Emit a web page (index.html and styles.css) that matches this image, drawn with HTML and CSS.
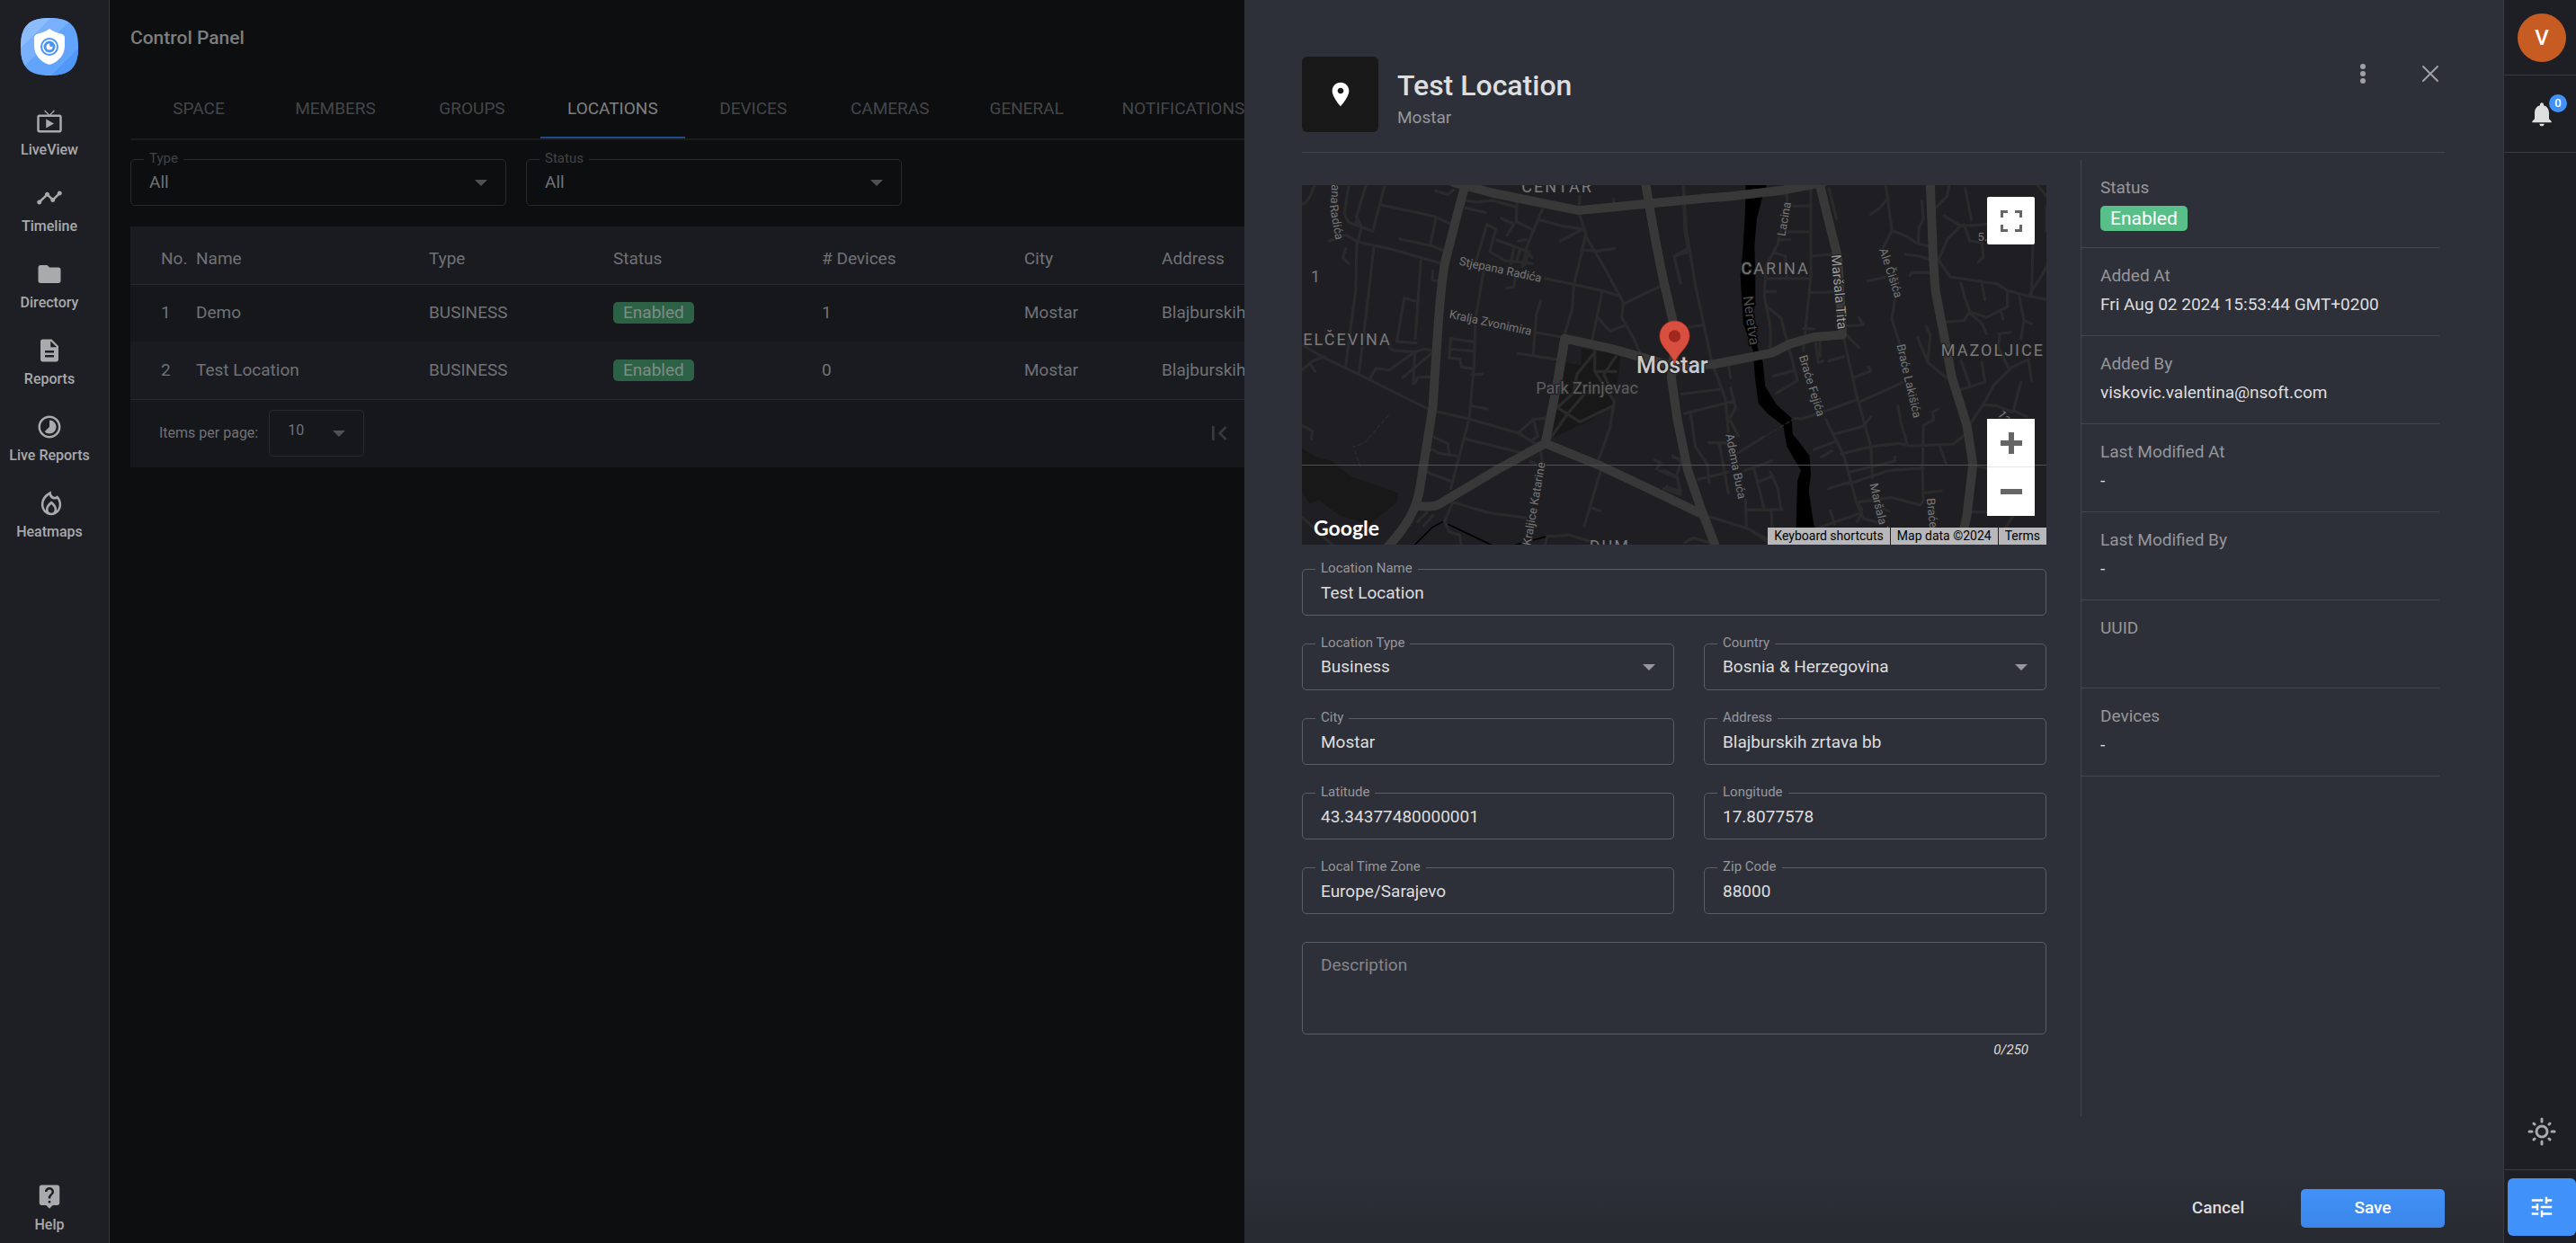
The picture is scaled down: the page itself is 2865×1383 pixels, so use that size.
FILE: index.html
```html
<!DOCTYPE html>
<html lang="en">

<head>
    <meta charset="UTF-8">
    <meta name="viewport" content="width=device-width, initial-scale=1.0">
    <title>Control Panel</title>
    <link rel="stylesheet" href="styles.css">
</head>

<body>
    <div class="app">
        <nav class="sidebar">
            <a href="#" class="logo" aria-label="Home">
                <svg viewBox="0 0 64 64">
                    <defs>
                        <clipPath id="logoShape">
                            <path d="M32 0C55 0 64 9 64 32S55 64 32 64 0 55 0 32 9 0 32 0z" />
                        </clipPath>
                    </defs>
                    <g clip-path="url(#logoShape)">
                        <path fill="#62a3fb" d="M0 0h64v64H0z" />
                        <path fill="#8dbcfb" d="M0 0h34L0 34z" />
                        <path fill="#79b0fb" d="M34 0h24L0 58V34z" />
                        <path fill="#4f97f9" d="M64 34v30H34z" />
                    </g>
                    <path fill="#fff" d="M32 12c4 3 8 4 14 6 2 1 3 2 3 4v9c0 10-7 17-14 20-2 1-4 1-6 0-7-3-14-10-14-20v-9c0-2 1-3 3-4 6-2 10-3 14-6z" />
                    <g fill="none" stroke="#4a93f8">
                        <circle cx="32" cy="32" r="9" stroke-width="2" />
                        <circle cx="32" cy="32" r="5" stroke-width="3" />
                    </g>
                    <circle cx="34" cy="30" r="2" fill="#4a93f8" />
                </svg>
            </a>
            <a href="#" class="nav-item">
                <svg class="icon" viewBox="0 0 24 24"><path d="M21 6h-7.59l3.29-3.29L16 2l-4 4-4-4-.71.71L10.59 6H3c-1.1 0-2 .89-2 2v12c0 1.1.9 2 2 2h18c1.1 0 2-.9 2-2V8c0-1.11-.9-2-2-2zm0 14H3V8h18v12zM9 10v8l7-4z" /></svg>
                <span>LiveView</span>
            </a>
            <a href="#" class="nav-item">
                <svg class="icon" viewBox="0 0 24 24"><path d="M23 8c0 1.1-.9 2-2 2-.18 0-.35-.02-.51-.07l-3.56 3.55c.05.16.07.34.07.52 0 1.1-.9 2-2 2s-2-.9-2-2c0-.18.02-.36.07-.52l-2.55-2.55c-.16.05-.34.07-.52.07s-.36-.02-.52-.07l-4.55 4.56c.05.16.07.33.07.51 0 1.1-.9 2-2 2s-2-.9-2-2 .9-2 2-2c.18 0 .35.02.51.07l4.56-4.55C8.02 9.36 8 9.18 8 9c0-1.1.9-2 2-2s2 .9 2 2c0 .18-.02.36-.07.52l2.55 2.55c.16-.05.34-.07.52-.07s.36.02.52.07l3.55-3.56C19.02 8.35 19 8.18 19 8c0-1.1.9-2 2-2s2 .9 2 2z" /></svg>
                <span>Timeline</span>
            </a>
            <a href="#" class="nav-item">
                <svg class="icon" viewBox="0 0 24 24"><path d="M10 4H4c-1.1 0-1.99.9-1.99 2L2 18c0 1.1.9 2 2 2h16c1.1 0 2-.9 2-2V8c0-1.1-.9-2-2-2h-8l-2-2z" /></svg>
                <span>Directory</span>
            </a>
            <a href="#" class="nav-item">
                <svg class="icon" viewBox="0 0 24 24"><path d="M14 2H6c-1.1 0-1.99.9-1.99 2L4 20c0 1.1.89 2 1.99 2H18c1.1 0 2-.9 2-2V8l-6-6zm2 16H8v-2h8v2zm0-4H8v-2h8v2zm-3-5V3.5L18.5 9H13z" /></svg>
                <span>Reports</span>
            </a>
            <a href="#" class="nav-item">
                <svg class="icon" viewBox="0 0 24 24"><path d="M16.24 7.76C15.07 6.59 13.54 6 12 6v6l-4.24 4.24c2.34 2.34 6.14 2.34 8.49 0 2.34-2.34 2.34-6.14-.01-8.48zM12 2C6.48 2 2 6.48 2 12s4.48 10 10 10 10-4.48 10-10S17.52 2 12 2zm0 18c-4.42 0-8-3.58-8-8s3.58-8 8-8 8 3.58 8 8-3.58 8-8 8z" /></svg>
                <span>Live Reports</span>
            </a>
            <a href="#" class="nav-item">
                <svg class="icon" viewBox="-2 0 24 24"><path fill-rule="evenodd" d="M11.5 1.2c-.3 2.6.9 4.3 2.3 4.8 1.5.5 2.6-.2 3-1.1 2.5 2 3.7 4.9 3.7 8.1 0 5.2-3.7 9.5-8.9 9.5S2.700 18.200 2.700 13c0-5 3.300-9.500 8.800-11.800zM9.800 4.500C6.500 6.700 4.700 9.700 4.700 13c0 2.200.8 4.100 2.100 5.400-.3-3.700 2.100-6.300 4.900-8.400 2.700 2.100 5.100 4.700 4.800 8.400 1.300-1.300 2-3.200 2-5.400 0-2-.5-3.700-1.600-5.100-3 1.300-6.600-.2-7.100-3.400zM11.700 12.800c-1.600 1.500-2.900 2.900-2.900 4.700 0 1.700 1.200 3 2.800 3s2.900-1.300 2.900-3c0-1.800-1.200-3.200-2.800-4.700z" /></svg>
                <span>Heatmaps</span>
            </a>
            <a href="#" class="nav-item help">
                <svg class="icon" viewBox="0 0 24 24"><path d="M19 2H5c-1.11 0-2 .9-2 2v14c0 1.1.89 2 2 2h4l3 3 3-3h4c1.1 0 2-.9 2-2V4c0-1.1-.9-2-2-2zm-6 16h-2v-2h2v2zm2.070-7.750l-.9.920C13.450 11.900 13 12.500 13 14h-2v-.5c0-1.100.450-2.100 1.170-2.830l1.240-1.260c.370-.360.590-.860.590-1.410 0-1.100-.9-2-2-2s-2 .9-2 2H8c0-2.210 1.790-4 4-4s4 1.790 4 4c0 .880-.360 1.680-.930 2.250z" /></svg>
                <span>Help</span>
            </a>
        </nav>

        <main class="main">
            <h1>Control Panel</h1>
            <div class="tabs" role="tablist">
                <button role="tab">SPACE</button>
                <button role="tab">MEMBERS</button>
                <button role="tab">GROUPS</button>
                <button role="tab" class="active" aria-selected="true">LOCATIONS</button>
                <button role="tab">DEVICES</button>
                <button role="tab">CAMERAS</button>
                <button role="tab">GENERAL</button>
                <button role="tab">NOTIFICATIONS</button>
            </div>
            <div class="filters">
                <div class="field select">
                    <label for="filterType">Type</label>
                    <select id="filterType">
                        <option>All</option>
                    </select>
                </div>
                <div class="field select">
                    <label for="filterStatus">Status</label>
                    <select id="filterStatus">
                        <option>All</option>
                    </select>
                </div>
            </div>
            <table class="locations">
                <colgroup>
                    <col class="col-no">
                    <col class="col-name">
                    <col class="col-type">
                    <col class="col-status">
                    <col class="col-devices">
                    <col class="col-city">
                    <col>
                </colgroup>
                <thead>
                    <tr>
                        <th>No.</th>
                        <th>Name</th>
                        <th>Type</th>
                        <th>Status</th>
                        <th># Devices</th>
                        <th>City</th>
                        <th>Address</th>
                    </tr>
                </thead>
                <tbody>
                    <tr>
                        <td>1</td>
                        <td>Demo</td>
                        <td>BUSINESS</td>
                        <td><span class="chip">Enabled</span></td>
                        <td>1</td>
                        <td>Mostar</td>
                        <td>Blajburskih</td>
                    </tr>
                    <tr>
                        <td>2</td>
                        <td>Test Location</td>
                        <td>BUSINESS</td>
                        <td><span class="chip">Enabled</span></td>
                        <td>0</td>
                        <td>Mostar</td>
                        <td>Blajburskih</td>
                    </tr>
                </tbody>
            </table>
            <div class="paginator">
                <label for="pageSize">Items per page:</label>
                <div class="field select page-size">
                    <select id="pageSize">
                        <option>10</option>
                    </select>
                </div>
                <button class="first-page" aria-label="First page" disabled>
                    <svg viewBox="0 0 24 24"><path d="M18.410 16.590L13.820 12l4.590-4.590L17 6l-6 6 6 6zM6 6h2v12H6z" /></svg>
                </button>
            </div>
        </main>

        <section class="drawer">
            <header class="drawer-header">
                <div class="pin-box">
                    <svg viewBox="0 0 24 24"><path d="M12 2C8.130 2 5 5.130 5 9c0 5.250 7 13 7 13s7-7.750 7-13c0-3.870-3.130-7-7-7zm0 9.500c-1.380 0-2.500-1.120-2.500-2.500s1.120-2.500 2.500-2.500 2.500 1.120 2.500 2.500-1.120 2.500-2.500 2.500z" /></svg>
                </div>
                <div class="heading">
                    <h2>Test Location</h2>
                    <p>Mostar</p>
                </div>
                <div class="header-actions">
                    <button aria-label="More options">
                        <svg viewBox="0 0 32 32"><circle cx="16" cy="8" r="3" /><circle cx="16" cy="16" r="3" /><circle cx="16" cy="24" r="3" /></svg>
                    </button>
                    <button aria-label="Close">
                        <svg viewBox="0 0 32 32"><path d="M8 8l16 16M24 8L8 24" stroke="currentColor" stroke-width="2" stroke-linecap="round" /></svg>
                    </button>
                </div>
            </header>

            <div class="drawer-body">
                <form class="form" id="locationForm">
                    <div class="map">
                        <svg class="map-canvas" viewBox="54 48 2481 1200" preserveAspectRatio="xMidYMid slice">
                            <!-- parks -->
                            <path class="park" d="M54 925L100 955 155 970 215 1020 375 1075 370 1105 280 1180 180 1150 110 1098 80 1110 54 1070z" />
                            <path class="park" d="M985 595L1115 615 1108 690 1085 790 1000 840 880 895 900 790 915 700 930 640 985 650z" />

                            <!-- side streets, west -->
                            <g class="street">
                                <path d="M54 112C75 110 85 75 97 48M210 48L196 140Q200 165 215 175L290 202 330 48M268 48L235 155 250 180M240 238L200 215 145 235M240 238L252 190 235 170M240 238L350 262 520 310M380 228L490 252 530 268" />
                                <path d="M320 115L430 138 500 155 553 180M500 160L482 250M237 240L233 400 200 650M293 260L275 420 245 670M450 300L432 560M600 100L640 105 690 100 770 122M770 110L768 170 828 200M600 125L665 140M718 160L760 178 738 215" />
                                <path d="M855 130L805 250 790 320M848 165L920 185 990 195 915 235M980 150L1000 210 985 280 960 380 955 460 925 560M1000 220L1060 320 1125 440 1120 490 1160 560 1185 620M985 265L1040 268 1095 260" />
                                <path d="M670 180L635 300M670 180L700 195 680 270 730 300 820 310M705 232L805 270 820 290M660 330L632 500 628 640 612 825 550 1060M865 360L960 380 1060 402 1115 420M1055 400L1020 570M1040 490L1080 535 1135 515" />
                                <path d="M1125 445L1250 385M850 435L835 480 825 610M775 610L905 630M830 540L920 555M550 560L630 572M550 560L545 625 580 628 585 655 620 660M550 595L628 602M620 680L655 680M620 785L672 795" />
                                <path d="M54 580L120 620 245 680 380 748 475 795M54 665L90 635 130 620M85 650L98 670M395 425L370 570 435 575M395 425L432 435M345 590L360 600 430 605 460 595 485 600M430 605L345 665 300 660 280 695M485 610L390 690M430 605L425 710M480 688L440 690 430 710M500 803L610 828 775 875 830 910" />
                                <path d="M775 875L825 830 865 825M825 830L840 885 820 900M485 885L540 910 545 950M472 935L490 930 510 942 570 952M472 935L470 1005 555 1038M598 895L780 940M555 1105L670 1140 800 1158M555 1110L530 1170 545 1205 580 1215 585 1250M470 1140L440 1170M490 1150L460 1185M54 850L88 868 86 895M54 1155L155 1248" />
                                <path d="M1050 1000L1020 1100 995 1185M1020 1125L1048 1135M1095 770L1080 860 1040 970M865 1248L870 1220 945 1215 1010 1235M1230 965L1250 975 1235 995M1245 1000L1305 1025 1315 1080 1260 1060M1290 950L1320 970M1325 48L1330 200 1340 260 1295 285 1315 375" />
                                <path d="M1030 600L1030 670 1100 670M1030 605L970 680 960 740 905 790M1030 670L1095 770M1100 620L1060 680 1090 740M880 895L940 810 1000 740M905 790L980 838 1090 785" />
                                <path d="M500 68L540 80 560 65M980 85L978 125M1093 95L1093 112M210 310L190 290 200 260M800 230L775 235M760 260L750 310M780 265L770 300M810 270L795 315M735 392L760 388 765 360M490 335L488 365 505 368M850 940L855 970M815 970L850 985" />
                            </g>

                            <!-- side streets, east -->
                            <g class="street" transform="translate(1260 0)">
                                <path d="M65 48L75 200 105 380 160 640 205 760 215 870M80 272L35 285 55 375M85 522L130 515M410 80L410 110 425 118 490 118M490 60L490 350 465 600M410 205L490 205M380 232L420 230M410 110L380 245 340 320 335 420 355 520 355 590M370 275L405 285 410 350M340 360L490 360M335 403L372 403" />
                                <path d="M345 455L390 490 430 640 445 700M365 685L430 668M375 742L445 700M495 285L580 278M490 407L570 405M465 527L500 528M550 60L575 160M575 520L665 515 650 490M610 550L650 590M600 560L640 740 690 920 695 1025M635 690L690 668 682 655M655 770L800 705M435 825L460 828 545 800 640 765" />
                                <path d="M505 570L515 640 530 635M520 570L520 620M550 635L600 620M740 48L760 200 730 260M740 100L720 125 690 145M760 200L810 220 840 240 890 255M860 100L865 160 850 190 848 240M805 280L850 285 890 298M820 350L825 340 890 340M680 368L740 355M770 430L760 495 790 590" />
                                <path d="M845 555L880 640 940 690M875 520L888 550 880 630M950 48L945 85 905 125M1005 60L1025 165M935 152L990 185 1100 178M1000 180L1020 235 1060 240M990 182L945 230 915 298 955 355 1110 378 1145 400 1200 415 1275 430M990 375L1005 430 1020 470 1075 490 1145 455 1145 405M1060 380L1070 430M1020 470L1000 500 940 505M1020 475L1060 510 1075 545" />
                                <path d="M1060 240L1065 290 1048 305M1275 120L1275 200M1230 250L1225 415M1275 320L1260 350 1220 410M1185 420L1200 500 1190 560M1200 500L1225 510M1115 545L1155 540M1120 545L1115 590 1150 660 1215 630 1225 700M1155 660L1100 715 1065 780 1020 845M975 735L1070 705 1060 640M990 635L1020 715M1190 705L1165 800 1210 820M1065 780L1110 785 1160 805" />
                                <path d="M780 785L790 840 812 915M565 880L665 852 690 820M590 945L690 920 785 910 820 918 965 912 1005 880M540 830L600 950 640 1100 660 1130M500 930L570 905M525 955L560 935M615 1045L750 1000 865 992M770 955L770 968 620 1005M550 1060L615 1040M865 850L862 1000 865 1100 855 1115 760 1090 650 1105" />
                                <path d="M865 850L900 830 895 805 915 795M920 920L940 975M1040 985L1075 992M1030 1138L1090 1140M865 1075L925 1068M60 745L185 730M70 810L235 768M222 725L240 790 215 835M90 815L105 920 145 980 150 1040M150 908L210 908M185 910L215 1075M215 820L248 885M300 990L335 1130M270 1000L360 968M320 1035L360 1020M355 1005L380 1060 390 1130" />
                                <path d="M272 1098L275 1190 350 1240M275 1132L395 1130M358 1130L362 1210M115 1030L215 1005M155 1155L275 1192 380 1248M70 1240L100 1225 150 1240M30 955L60 965 45 1010M0 1000L45 1020 55 1070 10 1055M555 1135L570 1180M520 1190L660 1140 645 1170M640 1100L665 1160 720 1175M1140 1190L1165 1150M215 645L222 690M1245 48L1275 85" />
                                <path d="M720 1125L750 1135M250 940L330 890M1125 475L1130 495" />
                            </g>

                            <!-- river and streams -->
                            <path class="river" transform="translate(1260 0)" d="M273 48L343 48 328 90 310 160 302 250 305 340 305 450 290 490 315 600 330 640 338 720 375 780 425 825 430 880 447 900 485 950 490 1010 483 1070 498 1170 515 1260 440 1260 442 1150 445 1035 457 1000 410 920 398 850 345 810 315 775 305 700 297 600 265 510 255 350 262 280 270 160z" />
                            <path class="stream" d="M430 1248L490 1188 522 1172M542 1180L685 1248M765 1248L865 1221" />

                            <!-- main roads -->
                            <g class="road">
                                <path d="M598 48C570 150 545 250 530 310 515 400 510 480 505 560L490 790 450 1040C440 1130 400 1190 335 1260" />
                                <path d="M560 40L690 75 975 133 1210 110 1400 92 1480 86 1660 65 1790 40" />
                                <path d="M1200 48C1225 200 1240 280 1262 380L1290 500 1296 600 1285 690 1305 830 1340 1000 1385 1130 1435 1260" />
                                <path d="M905 710L930 560 1090 595 1300 655 1430 645 1560 620 1620 608 1680 578 1760 555 1850 548" />
                                <path d="M930 560L905 710 865 910" />
                                <path d="M440 1118C500 1125 510 1115 540 1095L700 1000 800 945 865 910 1050 985 1220 1065 1385 1145" />
                                <path d="M1780 48L1810 170 1840 290 1855 548" />
                                <path d="M2148 48L2158 300 2165 400 2190 530 2220 690 2270 850 2290 980 2270 1150 2245 1260" />
                            </g>
                            <path class="footway" d="M343 815L265 905 245 915 225 920 250 990" />
                            <path class="footway" d="M1590 890L1690 830" />
                            <path class="tile-seam" d="M54 982H2535" />

                            <!-- street names -->
                            <g class="street-name">
                                <text transform="translate(154 46) rotate(94)">ana</text>
                                <text transform="translate(146 116) rotate(80)">Radića</text>
                                <text transform="translate(576 314) rotate(12)">Stjepana Radića</text>
                                <text transform="translate(543 491) rotate(12)">Kralja Zvonimira</text>
                                <text transform="translate(816 1252) rotate(-80)">Kraljice Katarine</text>
                                <text transform="translate(1664 220) rotate(-80)">Lacina</text>
                                <text transform="translate(1978 264) rotate(72)">Ale Čišića</text>
                                <text transform="translate(1710 620) rotate(73)">Braće Fejića</text>
                                <text transform="translate(2036 582) rotate(77)">Braće Lakišića</text>
                                <text transform="translate(1466 880) rotate(79)">Adema Buća</text>
                                <text transform="translate(1946 1046) rotate(77)">Maršala Tita</text>
                                <text transform="translate(2136 1094) rotate(84)">Braće</text>
                                <text transform="translate(2306 234)">5.</text>
                                <text transform="translate(2370 812) rotate(55)">13</text>
                            </g>
                            <text class="street-name strong" transform="translate(1818 282) rotate(85)">Maršala Tita</text>
                            <text class="water-name" transform="translate(1524 420) rotate(82)">Neretva</text>

                            <!-- district names -->
                            <g class="district">
                                <text x="786" y="74">CENTAR</text>
                                <text x="58" y="582">ELČEVINA</text>
                                <text x="84" y="372">1</text>
                                <text x="1518" y="345">CARINA</text>
                                <text x="2184" y="617">MAZOLJICE</text>
                                <text x="1012" y="1272">DUM</text>
                            </g>
                            <text class="park-name" x="834" y="744">Park Zrinjevac</text>
                            <text class="city" x="1169" y="674">Mostar</text>

                            <path fill="#d84f3f" stroke="#a52a20" stroke-width="2" d="M1296 648C1292 610 1246 592 1246 551a50 50 0 0 1 100 0C1346 592 1300 610 1296 648z" />
                            <circle cx="1296" cy="552" r="20" fill="#a0281e" />
                        </svg>
                        <a href="#" class="google">Google</a>
                        <button type="button" class="map-button fullscreen" aria-label="Toggle fullscreen">
                            <svg viewBox="0 0 24 24"><path d="M0 0h8v3H3v5H0zM16 0h8v8h-3V3h-5zM0 16h3v5h5v3H0zM21 16h3v8h-8v-3h5z" /></svg>
                        </button>
                        <div class="zoom">
                            <button type="button" class="map-button" aria-label="Zoom in">
                                <svg viewBox="0 0 24 24"><path d="M9 0h6v9h9v6h-9v9H9v-9H0V9h9z" /></svg>
                            </button>
                            <button type="button" class="map-button" aria-label="Zoom out">
                                <svg viewBox="0 0 24 24"><path d="M0 9h24v6H0z" /></svg>
                            </button>
                        </div>
                        <div class="attribution">
                            <button type="button">Keyboard shortcuts</button>
                            <span>Map data ©2024</span>
                            <a href="#">Terms</a>
                        </div>
                    </div>

                    <div class="fields">
                        <div class="field wide">
                            <label for="name">Location Name</label>
                            <input type="text" id="name" value="Test Location">
                        </div>
                        <div class="field select">
                            <label for="type">Location Type</label>
                            <select id="type">
                                <option>Business</option>
                            </select>
                        </div>
                        <div class="field select">
                            <label for="country">Country</label>
                            <select id="country">
                                <option>Bosnia &amp; Herzegovina</option>
                            </select>
                        </div>
                        <div class="field">
                            <label for="city">City</label>
                            <input type="text" id="city" value="Mostar">
                        </div>
                        <div class="field">
                            <label for="address">Address</label>
                            <input type="text" id="address" value="Blajburskih zrtava bb">
                        </div>
                        <div class="field">
                            <label for="latitude">Latitude</label>
                            <input type="text" id="latitude" value="43.34377480000001">
                        </div>
                        <div class="field">
                            <label for="longitude">Longitude</label>
                            <input type="text" id="longitude" value="17.8077578">
                        </div>
                        <div class="field">
                            <label for="timezone">Local Time Zone</label>
                            <input type="text" id="timezone" value="Europe/Sarajevo">
                        </div>
                        <div class="field">
                            <label for="zip">Zip Code</label>
                            <input type="text" id="zip" value="88000">
                        </div>
                        <div class="wide">
                            <textarea id="description" maxlength="250" placeholder="Description" aria-label="Description"></textarea>
                            <div class="counter">0/250</div>
                        </div>
                    </div>
                </form>

                <dl class="info">
                    <div>
                        <dt>Status</dt>
                        <dd><span class="chip">Enabled</span></dd>
                    </div>
                    <div>
                        <dt>Added At</dt>
                        <dd>Fri Aug 02 2024 15:53:44 GMT+0200</dd>
                    </div>
                    <div>
                        <dt>Added By</dt>
                        <dd>viskovic.valentina@nsoft.com</dd>
                    </div>
                    <div>
                        <dt>Last Modified At</dt>
                        <dd>-</dd>
                    </div>
                    <div>
                        <dt>Last Modified By</dt>
                        <dd>-</dd>
                    </div>
                    <div>
                        <dt>UUID</dt>
                        <dd></dd>
                    </div>
                    <div>
                        <dt>Devices</dt>
                        <dd>-</dd>
                    </div>
                </dl>
            </div>

            <footer class="drawer-footer">
                <button type="button" class="cancel">Cancel</button>
                <button type="submit" class="save" form="locationForm">Save</button>
            </footer>
        </section>

        <aside class="rail">
            <div class="rail-cell user">
                <button class="avatar">V</button>
            </div>
            <div class="rail-cell alerts">
                <button class="bell" aria-label="Notifications">
                    <svg viewBox="0 0 24 24"><path d="M12 22c1.100 0 2-.9 2-2h-4c0 1.100.890 2 2 2zm6-6v-5c0-3.070-1.640-5.640-4.500-6.320V4c0-.830-.670-1.500-1.500-1.500s-1.500.670-1.500 1.500v.680C7.630 5.360 6 7.920 6 11v5l-2 2v1h16v-1l-2-2z" /></svg>
                    <span class="badge">0</span>
                </button>
            </div>
            <div class="rail-cell theme">
                <button aria-label="Toggle theme">
                    <svg viewBox="0 0 32 32"><circle cx="16" cy="16" r="6" /><path d="M16 2v3M16 27v3M2 16h3M27 16h3M7 7l1 1M24 24l1 1M7 25l1-1M24 8l1-1" /></svg>
                </button>
            </div>
            <div class="rail-cell settings">
                <button aria-label="Control panel">
                    <svg viewBox="0 0 24 24"><path d="M3 17v2h6v-2H3zM3 5v2h10V5H3zm10 16v-2h8v-2h-8v-2h-2v6h2zM7 9v2H3v2h4v2h2V9H7zm14 4v-2H11v2h10zm-6-4h2V7h4V5h-4V3h-2v6z" /></svg>
                </button>
            </div>
        </aside>
    </div>
</body>

</html>
```

FILE: styles.css
```css
* {
    box-sizing: border-box;
}

body {
    margin: 0;
    font-family: Roboto, 'Liberation Sans', sans-serif;
    font-size: 19px;
    line-height: 24px;
    background: #0d0e10;
    color: #dededf;
}

h1,
h2,
p,
dl,
dd {
    margin: 0;
}

button,
input,
select,
textarea {
    font: inherit;
    color: inherit;
}

button {
    padding: 0;
    border: none;
    background: none;
    cursor: pointer;
}

a {
    color: inherit;
    text-decoration: none;
}

svg {
    display: block;
    fill: currentColor;
}

.app {
    display: grid;
    grid-template-columns: 122px minmax(0, 1fr) minmax(0, 1400px) 81px;
    height: 100vh;
}

/* Left navigation */
.sidebar {
    display: flex;
    flex-direction: column;
    align-items: center;
    gap: 28px;
    padding: 20px 11px 10px 0;
    background: #1e1f25;
    border-right: 1px solid #37383e;
    color: #a9aaac;
}

.logo {
    margin-bottom: 8px;
}

.logo svg {
    width: 64px;
    height: 64px;
}

.nav-item {
    display: flex;
    flex-direction: column;
    align-items: center;
    gap: 7px;
    font-size: 16px;
    font-weight: 500;
    line-height: 20px;
    white-space: nowrap;
}

.icon {
    width: 30px;
    height: 30px;
}

.help {
    margin-top: auto;
}

/* Main area */
.main {
    overflow: hidden;
    padding: 28px 0 0 23px;
    color: #717275;
}

.main h1 {
    font-size: 21px;
    font-weight: 500;
    line-height: 28px;
    color: #7c7d7e;
}

.tabs {
    display: flex;
    margin-top: 32px;
    border-bottom: 2px solid #1a1b1d;
}

.tabs button {
    flex: none;
    min-width: 152px;
    height: 66px;
    padding: 2px 30px 0;
    border-bottom: 2px solid transparent;
    color: #454648;
}

.tabs .active {
    color: #7f8081;
    border-color: #1f4b88;
}

.filters {
    display: flex;
    gap: 22px;
    margin: 21px 0 23px;
}

.filters .field {
    width: 418px;
}

/* Outlined field with the label set into the border */
.field {
    position: relative;
    min-width: 0;
}

.field label {
    position: absolute;
    top: -11px;
    left: 15px;
    padding: 0 6px;
    font-size: 15px;
    line-height: 20px;
    background: #2e3039;
    color: #96979b;
}

.field input,
.field select,
textarea {
    display: block;
    width: 100%;
    height: 52px;
    padding: 0 20px;
    border: 1px solid #5c5e66;
    border-radius: 5px;
    background: none;
    outline: none;
    appearance: none;
}

.select::after {
    content: "";
    position: absolute;
    top: 23px;
    right: 21px;
    border: 7px solid transparent;
    border-top-color: #96979b;
    border-bottom-width: 0;
    pointer-events: none;
}

.main .field label {
    background: #0d0e10;
    color: #434446;
}

.main .field select {
    border-color: #292a2c;
}

.main .select::after {
    border-top-color: #505153;
}

.locations {
    width: 100%;
    table-layout: fixed;
    border-collapse: collapse;
    white-space: nowrap;
    background: #1a1b20;
}

.locations th,
.locations td {
    padding: 0;
    text-align: left;
    font-weight: 400;
}

.locations th:first-child,
.locations td:first-child {
    padding-left: 34px;
}

.locations tr {
    height: 64px;
}

.locations thead tr {
    border-bottom: 1px solid #292a2f;
}

.locations th {
    padding-top: 8px;
}

.locations tbody tr:first-child {
    background: #16171b;
}

.col-no {
    width: 73px;
}

.col-name {
    width: 259px;
}

.col-type {
    width: 205px;
}

.col-status {
    width: 232px;
}

.col-devices {
    width: 225px;
}

.col-city {
    width: 153px;
}

.chip {
    display: inline-block;
    padding: 0 11px;
    border-radius: 5px;
    background: #59bf89;
    color: #fff;
}

.main .chip {
    background: #2d6146;
    color: #7e8c85;
}

.paginator {
    display: flex;
    align-items: center;
    gap: 12px;
    height: 76px;
    padding: 0 12px 2px 32px;
    border-top: 1px solid #292a2f;
    background: #16171b;
    font-size: 16px;
}

.page-size {
    width: 106px;
}

.page-size select {
    padding-bottom: 5px;
}

.first-page {
    margin-left: auto;
    color: #38393d;
}

.first-page svg {
    width: 32px;
    height: 32px;
}

/* Location details drawer */
.drawer {
    display: flex;
    flex-direction: column;
    min-height: 0;
    background: #2e3039;
}

.drawer-header {
    display: flex;
    gap: 21px;
    margin: 0 65px 0 64px;
    padding: 63px 0 22px;
    border-bottom: 1px solid #44464e;
}

.pin-box {
    display: flex;
    align-items: center;
    justify-content: center;
    width: 85px;
    height: 84px;
    border-radius: 6px;
    background: #181818;
    color: #fff;
}

.pin-box svg {
    width: 32px;
    height: 32px;
}

.heading h2 {
    margin-top: 12px;
    font-size: 32px;
    font-weight: 500;
    line-height: 40px;
}

.heading p {
    margin-top: 4px;
    color: #96979b;
}

.header-actions {
    display: flex;
    align-items: flex-start;
    gap: 43px;
    margin-left: auto;
    padding-top: 3px;
    color: #a0a1a4;
}

.header-actions svg {
    width: 32px;
    height: 32px;
}

.drawer-body {
    flex: 1;
    display: grid;
    grid-template-columns: minmax(0, 1fr) 405px;
    gap: 38px;
    min-height: 0;
    padding: 8px 65px 59px 64px;
}

.form {
    padding-top: 28px;
}

.fields {
    display: grid;
    grid-template-columns: 414fr 381fr;
    gap: 31px 33px;
    margin-top: 27px;
}

.wide {
    grid-column: 1 / -1;
}

textarea {
    height: 103px;
    padding: 13px 20px;
    resize: none;
}

textarea::placeholder {
    color: #85868a;
}

.counter {
    padding: 5px 20px 0;
    font-size: 15px;
    font-style: italic;
    text-align: right;
}

.info {
    padding-right: 6px;
    border-left: 1px solid #44464e;
}

.info > div {
    height: 98px;
    padding: 19px 0 0 21px;
    border-bottom: 1px solid #44464e;
}

.info dt {
    color: #96979b;
}

.info dd {
    margin-top: 8px;
}

.info dd .chip {
    display: block;
    width: max-content;
    font-size: 21px;
    line-height: 28px;
}

.drawer-footer {
    display: flex;
    align-items: center;
    justify-content: flex-end;
    height: 82px;
    padding: 4px 65px 0 64px;
    font-weight: 500;
    background: linear-gradient(#2e3039, #282a31);
}

.cancel {
    padding: 0 63px;
}

.save {
    width: 160px;
    height: 43px;
    border-radius: 5px;
    background: linear-gradient(#4091f9, #3c86e8);
    color: #fff;
}

/* Map */
.map {
    position: relative;
    height: 400px;
    overflow: hidden;
    background: #1e1e23;
}

.map-canvas {
    width: 100%;
    height: 100%;
}

.park {
    fill: #181818;
}

.river {
    fill: #000;
}

.street,
.road,
.stream,
.footway,
.tile-seam {
    fill: none;
    stroke-linejoin: round;
    stroke-linecap: round;
}

.street {
    stroke: #2a2a2b;
    stroke-width: 10px;
}

.road {
    stroke: #383838;
    stroke-width: 30px;
}

.stream {
    stroke: #000;
    stroke-width: 5px;
}

.footway {
    stroke: #303033;
    stroke-width: 3px;
    stroke-dasharray: 14 8;
}

.tile-seam {
    stroke: #505053;
    stroke-width: 3px;
}

.map-canvas text {
    paint-order: stroke;
    stroke: #212124;
    stroke-width: 8px;
    stroke-linejoin: round;
}

.street-name {
    font-size: 39px;
    fill: #767677;
}

.street-name.strong {
    font-size: 45px;
    fill: #9b9b9b;
}

.water-name {
    font-size: 48px;
    fill: #4c4c4e;
}

.map-canvas .water-name {
    stroke: #000;
}

.district {
    font-size: 54px;
    letter-spacing: 6px;
    fill: #7a7a7b;
}

.park-name {
    font-size: 54px;
    fill: #5e5e5f;
}

.city {
    font-size: 75px;
    font-weight: 500;
    fill: #c9c9c9;
}

.google {
    position: absolute;
    left: 13px;
    bottom: 5px;
    font-family: Lato, sans-serif;
    font-size: 23px;
    font-weight: 700;
    line-height: 28px;
    color: #fff;
}

.map-button {
    display: flex;
    align-items: center;
    justify-content: center;
    width: 53px;
    height: 53px;
    background: #fff;
    color: #666;
}

.map-button svg {
    width: 24px;
    height: 24px;
}

.fullscreen {
    position: absolute;
    top: 13px;
    right: 13px;
    border-radius: 2px;
}

.zoom {
    position: absolute;
    right: 13px;
    bottom: 32px;
    background: #fff;
}

.zoom .map-button + .map-button {
    height: 55px;
    border-top: 1px solid #e6e6e6;
}

.attribution {
    position: absolute;
    right: 0;
    bottom: 0;
    display: flex;
    gap: 1px;
    font-size: 14px;
    line-height: 19px;
    color: #000;
}

.attribution > * {
    padding: 0 7px;
    background: #b8b8ba;
}

/* Right rail */
.rail {
    display: flex;
    flex-direction: column;
    border-left: 1px solid #3a3b41;
    background: #1e1f24;
}

.rail-cell {
    display: flex;
    align-items: center;
    justify-content: center;
    padding-left: 4px;
    border-bottom: 1px solid #3a3b41;
}

.user {
    height: 84px;
}

.avatar {
    width: 54px;
    height: 54px;
    border-radius: 50%;
    background: #c75c22;
    color: #fff;
    font-size: 24px;
    font-weight: 500;
}

.alerts {
    height: 86px;
}

.bell {
    position: relative;
    color: #dededf;
}

.bell svg,
.theme svg {
    width: 32px;
    height: 32px;
}

.badge {
    position: absolute;
    top: -6px;
    right: -12px;
    width: 20px;
    height: 20px;
    border-radius: 50%;
    background: #4091f9;
    color: #fff;
    font-size: 13px;
    font-weight: 500;
    line-height: 20px;
}

.theme {
    height: 86px;
    margin-top: auto;
    color: #a9aaac;
}

.theme svg {
    fill: none;
    stroke: currentColor;
    stroke-width: 3px;
    stroke-linecap: round;
}

.settings {
    height: 81px;
    border-bottom: none;
}

.settings button {
    display: flex;
    align-items: center;
    justify-content: center;
    width: 100%;
    height: 64px;
    border-radius: 6px;
    background: #4091f9;
    color: #fff;
}

.settings svg {
    width: 30px;
    height: 30px;
}
```
